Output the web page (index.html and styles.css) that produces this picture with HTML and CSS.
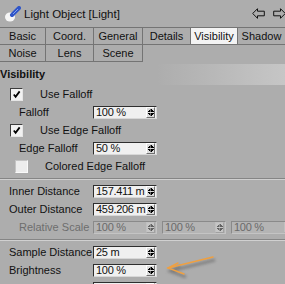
FILE: index.html
```html
<!DOCTYPE html>
<html lang="en">
<head>
    <meta charset="UTF-8">
    <title>Light Object [Light]</title>
    <link rel="stylesheet" href="styles.css">
</head>
<body>
    <div class="panel">
        <div class="titlebar">
            <svg class="light-icon" viewBox="0 0 17 16">
                <ellipse cx="6" cy="11" rx="5" ry="4.5" fill="#f6f6f6"/>
                <line x1="8" y1="9" x2="15" y2="2" stroke="#2f55c8" stroke-width="4" stroke-linecap="round"/>
                <line x1="9" y1="8" x2="14" y2="3" stroke="#7fa0f0" stroke-width="1"/>
            </svg>
            <span class="title">Light Object [Light]</span>
            <div class="nav-arrows">
                <svg viewBox="0 0 13 11"><polygon points="0.7,5.5 5.5,0.7 5.5,3.2 12.3,3.2 12.3,7.8 5.5,7.8 5.5,10.3" fill="none" stroke="#111" stroke-width="1"/></svg>
                <svg viewBox="0 0 13 11"><polygon points="12.3,5.5 7.5,0.7 7.5,3.2 0.7,3.2 0.7,7.8 7.5,7.8 7.5,10.3" fill="none" stroke="#111" stroke-width="1"/></svg>
            </div>
        </div>

        <div class="tabs">
            <div class="tab">Basic</div>
            <div class="tab">Coord.</div>
            <div class="tab">General</div>
            <div class="tab">Details</div>
            <div class="tab active">Visibility</div>
            <div class="tab last">Shadow</div>
            <div class="tab">Noise</div>
            <div class="tab">Lens</div>
            <div class="tab">Scene</div>
        </div>

        <div class="section-head">Visibility</div>

        <div class="row">
            <span class="checkbox checked"><svg viewBox="0 0 10 10"><polyline points="2,5 4,7.5 8.5,1.5" fill="none" stroke="#000" stroke-width="2"/></svg></span>
            <span>Use Falloff</span>
        </div>
        <div class="row">
            <span class="label">Falloff</span>
            <div class="num"><span class="value">100 %</span><span class="spin"></span></div>
        </div>
        <div class="row">
            <span class="checkbox checked"><svg viewBox="0 0 10 10"><polyline points="2,5 4,7.5 8.5,1.5" fill="none" stroke="#000" stroke-width="2"/></svg></span>
            <span>Use Edge Falloff</span>
        </div>
        <div class="row">
            <span class="label">Edge Falloff</span>
            <div class="num"><span class="value">50 %</span><span class="spin"></span></div>
        </div>
        <div class="row wide">
            <span class="checkbox blank"></span>
            <span>Colored Edge Falloff</span>
        </div>

        <div class="divider"></div>

        <div class="row">
            <span class="label outer">Inner Distance</span>
            <div class="num"><span class="value">157.411 m</span><span class="spin"></span></div>
        </div>
        <div class="row">
            <span class="label outer">Outer Distance</span>
            <div class="num"><span class="value">459.206 m</span><span class="spin"></span></div>
        </div>
        <div class="row">
            <span class="label muted">Relative Scale</span>
            <div class="num disabled"><span class="value">100 %</span><span class="spin"></span></div>
            <div class="num disabled"><span class="value">100 %</span><span class="spin"></span></div>
            <div class="num disabled"><span class="value">100 %</span><span class="spin"></span></div>
        </div>

        <div class="divider"></div>

        <div class="row">
            <span class="label outer">Sample Distance</span>
            <div class="num"><span class="value">25 m</span><span class="spin"></span></div>
        </div>
        <div class="row">
            <span class="label outer">Brightness</span>
            <div class="num"><span class="value">100 %</span><span class="spin"></span></div>
        </div>
        <div class="row">
            <span class="label outer"></span>
            <div class="num"><span class="value"></span><span class="spin"></span></div>
        </div>

        <!-- orange note arrow drawn over the panel -->
        <svg class="note-arrow" viewBox="0 0 60 30">
            <defs>
                <filter id="soft" x="-20%" y="-50%" width="140%" height="200%">
                    <feGaussianBlur stdDeviation="1.6"/>
                </filter>
            </defs>
            <g stroke="#6e6e6e" stroke-width="2.5" fill="none" filter="url(#soft)" opacity="0.8">
                <polyline points="55,10 10,21"/>
                <polyline points="20,16 10,21 26,27"/>
            </g>
            <g stroke="#f0a040" stroke-width="1.4" fill="none" stroke-linecap="round">
                <polyline points="53,7 8,18"/>
                <polyline points="18,13 8,18 24,24"/>
            </g>
        </svg>
    </div>
</body>
</html>
```

FILE: styles.css
```css
* {
    margin: 0;
    padding: 0;
    box-sizing: border-box;
}

body {
    width: 285px;
    height: 284px;
    overflow: hidden;
    background: #adadad;
    font-family: 'Liberation Sans', Arial, sans-serif;
    font-size: 11px;
    color: #111;
}

.panel {
    position: relative;
    height: 284px;
}

.titlebar {
    display: flex;
    align-items: center;
    height: 27px;
    padding-left: 4px;
}

.light-icon {
    width: 17px;
    height: 16px;
    margin-right: 3px;
}

.title {
    font-size: 11.5px;
}

.nav-arrows {
    margin-left: auto;
    display: flex;
    gap: 8px;
    margin-right: -1px;
}

.nav-arrows svg {
    width: 13px;
    height: 11px;
}

.tabs {
    display: grid;
    grid-template-columns: 46px 48px 49px 48px 47px 47px;
    grid-auto-rows: 17px;
    border-top: 1px solid #747474;
}

.tab {
    border-right: 1px solid #747474;
    border-bottom: 1px solid #747474;
    text-align: center;
    line-height: 16px;
    white-space: nowrap;
}

.tab.active {
    background: #f3f3f3;
}

.tab.last {
    border-right: none;
}

.section-head {
    font-weight: bold;
    height: 21px;
    line-height: 20px;
    margin-top: 2px;
    background: linear-gradient(to right, rgba(200, 200, 200, 0) 55%, #c6c6c6 100%);
}

.row {
    display: flex;
    align-items: center;
    height: 18px;
    padding-left: 10px;
    white-space: nowrap;
}

.row.wide {
    padding-left: 15px;
}

.label {
    width: 93px;
    margin-left: -10px;
    padding-left: 19px;
    flex-shrink: 0;
}

.label.outer {
    padding-left: 9px;
}

.label.muted {
    color: #6e6e6e;
}

.checkbox {
    display: flex;
    align-items: center;
    justify-content: center;
    width: 13px;
    height: 13px;
    margin-right: 17px;
    border: 1px solid;
    border-color: #3c3c3c #e6e6e6 #e6e6e6 #3c3c3c;
    background: #f2f2f2;
}

.checkbox svg {
    width: 9px;
    height: 9px;
}

.checkbox.blank {
    border-color: #c4c4c4 #fafafa #fafafa #c4c4c4;
    background: #ededed;
}

.num {
    display: flex;
    align-items: center;
    width: 64px;
    height: 13px;
    margin-right: 5px;
    padding-left: 2px;
    border: 1px solid;
    border-color: #2e2e2e #d8d8d8 #d8d8d8 #2e2e2e;
    background: #f0f0f0;
    flex-shrink: 0;
}

.num .value {
    flex: 1;
    overflow: hidden;
    font-size: 11px;
    letter-spacing: -0.3px;
}

.spin {
    width: 9px;
    height: 11px;
    margin-right: 1px;
    flex-shrink: 0;
    border: 1px solid;
    border-color: #ffffff #707070 #707070 #ffffff;
    background:
        linear-gradient(to bottom right, transparent 50%, #000 50%) 0 1px / 3.5px 3px no-repeat,
        linear-gradient(to bottom left, transparent 50%, #000 50%) 3.5px 1px / 3.5px 3px no-repeat,
        linear-gradient(to top right, transparent 50%, #000 50%) 0 5px / 3.5px 3px no-repeat,
        linear-gradient(to top left, transparent 50%, #000 50%) 3.5px 5px / 3.5px 3px no-repeat,
        #dcdcdc;
}

.num.disabled {
    border-color: #8a8a8a #c4c4c4 #c4c4c4 #8a8a8a;
    background: #b4b4b4;
    color: #6a6a6a;
}

.num.disabled .spin {
    border-color: #cfcfcf #8c8c8c #8c8c8c #cfcfcf;
    opacity: 0.45;
}

.divider {
    height: 2px;
    margin: 3px 0 2px;
    border-top: 1px solid #858585;
    border-bottom: 1px solid #d0d0d0;
}

.note-arrow {
    position: absolute;
    left: 160px;
    top: 250px;
    width: 60px;
    height: 30px;
}
```
